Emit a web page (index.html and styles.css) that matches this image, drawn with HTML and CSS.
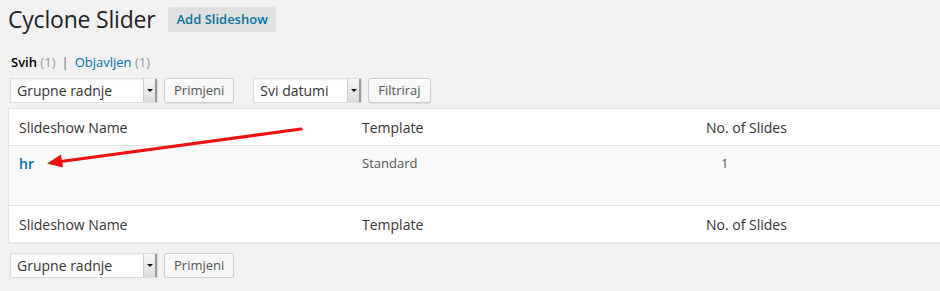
FILE: index.html
```html
<!DOCTYPE html>
<html lang="hr">
<head>
    <meta charset="UTF-8">
    <title>Cyclone Slider</title>
    <link rel="stylesheet" href="styles.css">
</head>
<body>

<div class="wrap">
    <div class="title-row">
        <h2>Cyclone Slider</h2>
        <a class="add-new" href="#">Add Slideshow</a>
    </div>

    <ul class="subsubsub">
        <li class="current">Svih <span class="count">(1)</span></li>
        <li class="sep">|</li>
        <li><a href="#">Objavljen <span class="count">(1)</span></a></li>
    </ul>

    <div class="tablenav">
        <div class="fake-select wide"><span>Grupne radnje</span><i class="arrow"></i></div>
        <button class="button">Primjeni</button>
        <div class="fake-select dates"><span>Svi datumi</span><i class="arrow"></i></div>
        <button class="button">Filtriraj</button>
    </div>

    <div class="table-box">
        <table class="list">
            <thead>
                <tr>
                    <th class="col-name">Slideshow Name</th>
                    <th class="col-tpl">Template</th>
                    <th>No. of Slides</th>
                </tr>
            </thead>
            <tbody>
                <tr class="alt">
                    <td class="col-name"><a href="#" class="row-title">hr</a></td>
                    <td class="col-tpl">Standard</td>
                    <td class="col-num">1</td>
                </tr>
            </tbody>
            <tfoot>
                <tr>
                    <th class="col-name">Slideshow Name</th>
                    <th class="col-tpl">Template</th>
                    <th>No. of Slides</th>
                </tr>
            </tfoot>
        </table>

        <!-- annotation arrow drawn over the table -->
        <svg class="arrow-note" width="300" height="60" viewBox="0 0 300 60">
            <line x1="285" y1="10" x2="45" y2="42.5" stroke="#f20f0f" stroke-width="3.2" stroke-linecap="round"/>
            <polygon points="31,44.5 47,48.5 45,35.5" fill="#f20f0f"/>
        </svg>
    </div>

    <div class="tablenav bottom">
        <div class="fake-select wide"><span>Grupne radnje</span><i class="arrow"></i></div>
        <button class="button">Primjeni</button>
    </div>
</div>

</body>
</html>
```

FILE: styles.css
```css
body {
    margin: 0;
    background-color: #f1f1f1;
    font-family: "Open Sans", "Noto Sans", sans-serif;
    font-size: 13px;
    color: #444;
    overflow: hidden;
}
.wrap {
    padding: 5px 0 0 8px;
}
.title-row {
    display: flex;
    align-items: center;
    gap: 13px;
    height: 28px;
}
h2 {
    margin: 0;
    font-size: 23px;
    font-weight: 400;
    color: #222;
    letter-spacing: -0.2px;
}
.add-new {
    background-color: #e0e0e0;
    color: #0074a2;
    font-weight: 600;
    text-decoration: none;
    padding: 3px 8px 4px;
    border-radius: 2px;
    font-size: 13px;
    line-height: 18px;
}
.subsubsub {
    list-style: none;
    margin: 21px 0 0 3px;
    padding: 0;
    display: flex;
    gap: 6px;
    font-size: 13px;
    line-height: 16px;
}
.subsubsub .current {
    color: #000;
    font-weight: 600;
}
.subsubsub .count {
    color: #999;
    font-weight: 400;
}
.subsubsub .sep {
    color: #666;
}
.subsubsub a {
    color: #0074a2;
    text-decoration: none;
}
.tablenav {
    display: flex;
    align-items: center;
    gap: 6px;
    margin: 7px 0 0 2px;
    height: 26px;
}
.tablenav.bottom {
    margin-top: 9px;
}
.fake-select {
    display: flex;
    align-items: center;
    justify-content: space-between;
    height: 25px;
    box-sizing: border-box;
    background-color: #fff;
    border: 1px solid #ddd;
    box-shadow: inset 0 1px 2px rgba(0, 0, 0, 0.07);
    padding-left: 6px;
    font-size: 14px;
    color: #333;
}
.fake-select.wide {
    width: 148px;
}
.fake-select.dates {
    width: 109px;
    margin-left: 13px;
}
.fake-select .arrow {
    width: 11px;
    height: 23px;
    border-left: 1px solid #ccc;
    border-right: 2px solid #999;
    background: linear-gradient(#f7f7f7, #dcdcdc);
    position: relative;
}
.fake-select .arrow::after {
    content: "";
    position: absolute;
    left: 3px;
    top: 10px;
    border-left: 3px solid transparent;
    border-right: 3px solid transparent;
    border-top: 3px solid #111;
}
.button {
    height: 25px;
    padding: 0 9px;
    background-color: #f7f7f7;
    border: 1px solid #ccc;
    border-radius: 3px;
    box-shadow: 0 1px 0 #fff inset, 0 1px 0 rgba(0, 0, 0, 0.08);
    font-family: inherit;
    font-size: 13px;
    color: #555;
}
.table-box {
    position: relative;
    margin-top: 5px;
}
.list {
    width: 1060px;
    border-collapse: collapse;
    background-color: #fff;
    border: 1px solid #e5e5e5;
    box-shadow: 0 1px 1px rgba(0, 0, 0, 0.04);
}
.list th {
    text-align: left;
    font-weight: 400;
    font-size: 14px;
    color: #333;
    height: 36px;
    padding: 0 10px;
    vertical-align: middle;
}
.list thead th {
    border-bottom: 1px solid #e1e1e1;
}
.list tfoot th {
    border-top: 1px solid #e1e1e1;
}
.list td {
    height: 60px;
    padding: 8px 10px;
    box-sizing: border-box;
    vertical-align: top;
    font-size: 13px;
    color: #555;
}
.list .col-name {
    width: 323px;
}
.list .col-tpl {
    width: 324px;
}
.list .col-num {
    padding-left: 25px;
}
.alt {
    background-color: #f9f9f9;
}
.row-title {
    color: #0074a2;
    font-weight: 600;
    font-size: 14px;
    text-decoration: none;
}
.arrow-note {
    position: absolute;
    left: 8px;
    top: 11px;
}
```
